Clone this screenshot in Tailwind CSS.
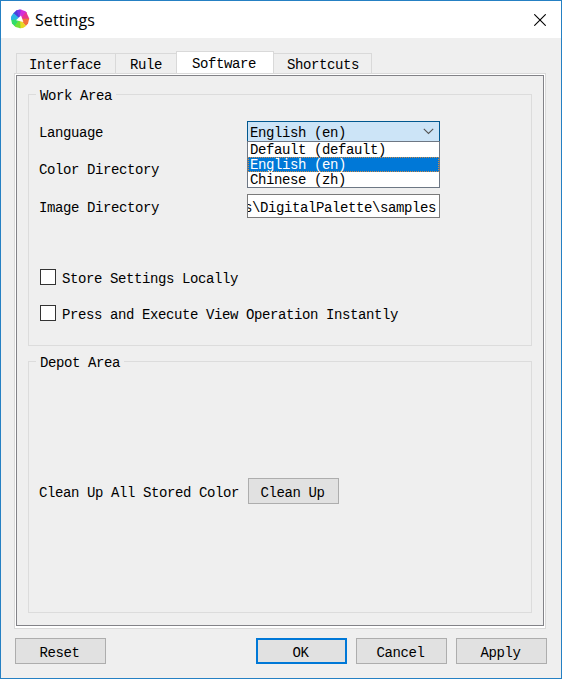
<!DOCTYPE html>
<html lang="en">
<head>
<meta charset="utf-8">
<title>Settings</title>
<script src="https://cdn.jsdelivr.net/npm/@tailwindcss/browser@4"></script>
</head>
<body class="w-[562px] h-[679px] overflow-hidden">
<div class="w-[562px] h-[679px] border border-[#2580c3] bg-[#efefef] flex flex-col text-black whitespace-nowrap text-[14px] tracking-[-0.401px] leading-4 font-['Liberation_Mono',monospace]">
  <header class="h-[37px] shrink-0 bg-white flex items-center pl-[9px] pr-[15px]">
    <svg class="-mt-px w-5 h-5 shrink-0" viewBox="0 0 20 20">
      <path d="M10 10L3 4.5L6.5 1.3L10 .7Z" fill="#4840dc"/>
      <path d="M10 10L6.5 1.3L10 .6L11.5 .8Z" fill="#7a35e8"/>
      <path d="M10 10L10.5 .6L15.5 2.2L17 4Z" fill="#d42cd8"/>
      <path d="M10 10L16.2 3L19.2 9.5L19 11Z" fill="#e8348c"/>
      <path d="M10 10L19.2 9.5L18 14.5L15.8 17Z" fill="#f4703c"/>
      <path d="M10 10L16 17L13 19L9.5 19.2Z" fill="#e8d822"/>
      <path d="M10 10L10.5 19.3L5.5 18L4 16.5Z" fill="#72e034"/>
      <path d="M10 10L4.5 17L2 14.5L1 10Z" fill="#30dc68"/>
      <path d="M10 10L1 11L1 7.5L3.5 4Z" fill="#2cb4e4"/>
      <path d="M11 6.4L13.4 13L6 11.2Z" fill="#fff"/>
    </svg>
    <h1 class="ml-[5px] text-[16px] leading-6 tracking-[0.08px] font-['Open_Sans','Noto_Sans',sans-serif]">Settings</h1>
    <svg class="ml-auto w-[12px] h-[12px]" viewBox="0 0 12 12"><path d="M.3.3L11.7 11.7M11.7.3L.3 11.7" stroke="#000" stroke-width="1.1" fill="none"/></svg>
  </header>

  <nav class="mt-[13px] ml-[15px] h-[22px] shrink-0 flex items-end">
    <div class="w-[100px] h-5 border border-b-0 border-[#d9d9d9] pl-[12px] pt-[3px]">Interface</div>
    <div class="w-[60px] h-5 border-t border-[#d9d9d9] pl-[14px] pt-[3px]">Rule</div>
    <div class="w-[98px] h-[22px] border border-b-0 border-[#d9d9d9] bg-white pl-[15px] pt-[4px]">Software</div>
    <div class="w-[98px] h-5 border border-l-0 border-b-0 border-[#d9d9d9] pl-[13px] pt-[3px]">Shortcuts</div>
  </nav>

  <main class="ml-[13px] w-[532px] h-[556px] shrink-0 border border-[#d9d9d9] bg-white pl-px pt-px">
    <div class="w-[528px] h-[551px] border border-[#828287] bg-[#efefef] pl-[11px] pt-[18px]">
      <section class="w-[504px] h-[252px] border border-[#dcdcdc] flex flex-col">
        <h2 class="-mt-[8px] ml-[7px] h-4 self-start bg-[#efefef] px-[4px] pt-px">Work Area</h2>
        <div class="mt-[18px] ml-[10px] h-[21px] flex items-center">
          <span class="w-[208px] pt-[2px]">Language</span>
          <div class="relative w-[193px] h-[21px] bg-[#cce4f7] border border-[#00578f] flex items-center pl-[2px] pr-[5px] pt-[2px]">
            <span>English (en)</span>
            <svg class="-mt-[2px] ml-auto w-[11px] h-[7px]" viewBox="0 0 11 7"><path d="M.8.8L5.5 5.5L10.2.8" fill="none" stroke="#555" stroke-width="1.1"/></svg>
            <div class="absolute z-10 -left-px top-[19px] w-[193px] h-[47px] border border-[#6d7784] bg-white leading-[15px]">
              <div class="h-[15px] pl-[2px] pt-px">Default (default)</div>
              <div class="h-[15px] pl-[2px] pt-px bg-[#0078d7] text-white outline-1 -outline-offset-1 outline-dotted outline-[#d08a45]">English (en)</div>
              <div class="h-[15px] pl-[2px] pt-px">Chinese (zh)</div>
            </div>
          </div>
        </div>
        <div class="mt-[15px] ml-[10px] h-6 flex items-center">
          <span class="w-[208px] pt-px">Color Directory</span>
        </div>
        <div class="mt-[13px] ml-[10px] h-6 flex items-center">
          <span class="w-[208px] pt-[3px]">Image Directory</span>
          <div class="w-[193px] h-6 bg-white border border-[#7a7a7a] overflow-hidden flex justify-end items-center pr-[3px] pt-[3px]"><span>s\DigitalPalette\samples</span></div>
        </div>
        <div class="mt-[51px] ml-[11px] h-4 flex items-center">
          <span class="w-4 h-4 border border-[#333] bg-white"></span><span class="ml-[6px] pt-[4px]">Store Settings Locally</span>
        </div>
        <div class="mt-[20px] ml-[11px] h-4 flex items-center">
          <span class="w-4 h-4 border border-[#333] bg-white"></span><span class="ml-[6px] pt-[4px]">Press and Execute View Operation Instantly</span>
        </div>
      </section>
      <section class="mt-[15px] w-[504px] h-[252px] border border-[#dcdcdc] flex flex-col">
        <h2 class="-mt-[8px] ml-[7px] h-4 self-start bg-[#efefef] px-[4px] pt-px">Depot Area</h2>
        <div class="mt-[108px] ml-[10px] h-[26px] flex items-center">
          <span class="w-[209px] pt-[4px]">Clean Up All Stored Color</span>
          <button class="w-[91px] h-[26px] border border-[#adadad] bg-[#e1e1e1] pt-[4px] pr-[2px]">Clean Up</button>
        </div>
      </section>
    </div>
  </main>

  <footer class="mt-[9px] pl-[14px] pr-[14px] flex">
    <button class="w-[91px] h-[26px] border border-[#adadad] bg-[#e1e1e1] pt-[4px] pr-[2px]">Reset</button>
    <button class="ml-auto w-[91px] h-[26px] border-2 border-[#0078d7] bg-[#e1e1e1] pt-[4px] pr-[2px]">OK</button>
    <button class="ml-[9px] w-[91px] h-[26px] border border-[#adadad] bg-[#e1e1e1] pt-[4px] pr-[2px]">Cancel</button>
    <button class="ml-[9px] w-[91px] h-[26px] border border-[#adadad] bg-[#e1e1e1] pt-[4px] pr-[2px]">Apply</button>
  </footer>
</div>
</body>
</html>
